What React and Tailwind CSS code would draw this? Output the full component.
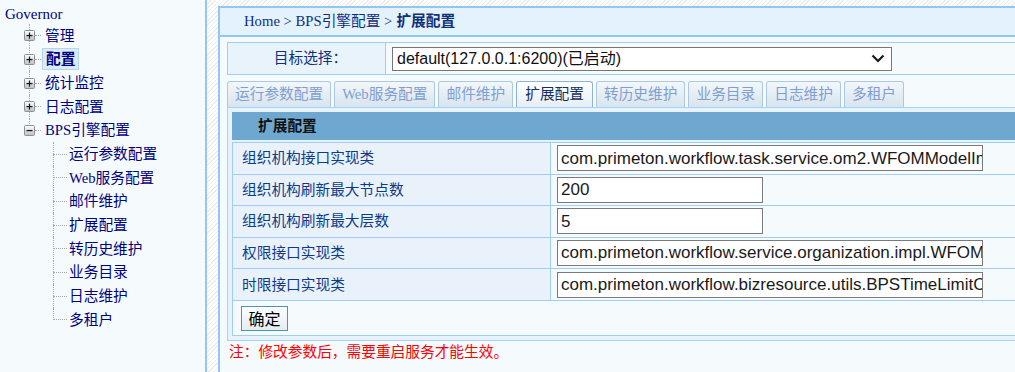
import React from 'react';

const topNodes = [
  { label: '管理' },
  { label: '配置', active: true },
  { label: '统计监控' },
  { label: '日志配置' },
];

const childNodes = ['运行参数配置', 'Web服务配置', '邮件维护', '扩展配置', '转历史维护', '业务目录', '日志维护', '多租户'];

const tabs = ['运行参数配置', 'Web服务配置', '邮件维护', '扩展配置', '转历史维护', '业务目录', '日志维护', '多租户'];

const rows = [
  { label: '组织机构接口实现类', value: 'com.primeton.workflow.task.service.om2.WFOMModelImpl', wide: true },
  { label: '组织机构刷新最大节点数', value: '200' },
  { label: '组织机构刷新最大层数', value: '5' },
  { label: '权限接口实现类', value: 'com.primeton.workflow.service.organization.impl.WFOMPermissionImpl', wide: true },
  { label: '时限接口实现类', value: 'com.primeton.workflow.bizresource.utils.BPSTimeLimitCalendarImpl', wide: true },
];

function ToggleBox({ open }) {
  return (
    <svg width="11" height="11" viewBox="0 0 11 11" className="relative z-10 block">
      <defs>
        <linearGradient id={open ? 'gm' : 'gp'} x1="0" y1="0" x2="0" y2="1">
          <stop offset="0" stopColor="#ffffff" />
          <stop offset="1" stopColor="#b9bdc2" />
        </linearGradient>
      </defs>
      <rect x="0.5" y="0.5" width="10" height="10" rx="1" fill={`url(#${open ? 'gm' : 'gp'})`} stroke="#8b9096" />
      <rect x="2.5" y="5" width="6" height="1.2" fill="#111" />
      {!open && <rect x="4.9" y="2.6" width="1.2" height="6" fill="#111" />}
    </svg>
  );
}

function TopRow({ label, active, open, last }) {
  return (
    <div className="flex items-center h-[23.67px]">
      <div className="relative ml-[24px] w-[11px] h-full flex items-center">
        <div className={`absolute left-[5px] top-0 border-l border-dotted border-[#a8a8a8] ${last ? 'h-1/2' : 'h-full'}`} />
        <ToggleBox open={open} />
      </div>
      <div className="w-[6px] border-t border-dotted border-[#a8a8a8]" />
      {active ? (
        <span className="ml-[1px] px-[3px] h-[22px] flex items-center bg-[#d9ebf7] border border-[#b4d5ec] font-bold text-[#000080]">{label}</span>
      ) : (
        <span className="ml-[2px] px-[2px] text-[#000080]">{label}</span>
      )}
    </div>
  );
}

function ChildRow({ label, last }) {
  return (
    <div className="flex items-center h-[23.67px]">
      <div className="relative ml-[53px] w-[14px] h-full flex items-center">
        <div className={`absolute left-0 top-0 border-l border-dotted border-[#a8a8a8] ${last ? 'h-1/2' : 'h-full'}`} />
        <div className="w-full border-t border-dotted border-[#a8a8a8]" />
      </div>
      <span className="ml-[2px] text-[#000080]">{label}</span>
    </div>
  );
}

export default function App() {
  return (
    <div className="w-[1015px] h-[372px] overflow-hidden flex bg-[repeating-linear-gradient(135deg,#ffffff_0px,#ffffff_2px,#ececec_2px,#ececec_3px)] font-['Liberation_Serif','Noto_Sans_CJK_SC',serif] text-[14.7px]">
      {/* tree */}
      <div className="w-[207px] shrink-0 h-full bg-[#f5fbfd] border-r-2 border-[#93c7f3]">
        <div className="h-[24px] pl-[5px] pt-[4px] leading-[20px] text-[#000080] text-[15px]">Governor</div>
        {topNodes.map((n) => (
          <TopRow key={n.label} label={n.label} active={n.active} />
        ))}
        <TopRow label="BPS引擎配置" open last />
        {childNodes.map((c, i) => (
          <ChildRow key={c} label={c} last={i === childNodes.length - 1} />
        ))}
      </div>

      {/* main */}
      <div className="ml-[11px] mt-[6px] flex-1 min-w-0 h-[366px] border-l-2 border-t-2 border-[#93c7f3] bg-[#f5fbfd]">
        <div className="h-[29px] flex items-center pl-[24px] bg-[#e3f2fd] border-b-2 border-[#93c7f3] text-[#10307a]">
          <span>Home &gt; BPS引擎配置 &gt; </span>
          <span className="font-bold ml-[4px]">扩展配置</span>
        </div>

        <div className="pl-[7px]">
          {/* target selection */}
          <div className="mt-[5px] h-[33px] flex border-y border-[#9fcdf5]">
            <div className="w-[159px] shrink-0 flex items-center justify-center bg-[#e8f3fb] border-x border-[#9fcdf5] text-[#10307a] pl-[8px]">
              目标选择：
            </div>
            <div className="flex items-center pl-[6px]">
              <div className="w-[500px] h-[24px] bg-white border border-[#767676] flex items-center justify-between pl-[4px] pr-[6px] font-['Liberation_Sans','Noto_Sans_CJK_SC',sans-serif] text-[16px] text-[#111]">
                <span>default(127.0.0.1:6200)(已启动)</span>
                <svg width="14" height="9" viewBox="0 0 14 9">
                  <path d="M1.5 1.5 L7 7 L12.5 1.5" fill="none" stroke="#1a1a1a" strokeWidth="2.2" />
                </svg>
              </div>
            </div>
          </div>

          {/* tabs */}
          <div className="mt-[6px] flex gap-[3px] items-end">
            {tabs.map((t) => {
              const on = t === '扩展配置';
              return (
                <div
                  key={t}
                  className={
                    on
                      ? 'h-[26px] px-[8px] flex items-center rounded-t-[3px] border border-b-0 border-[#8db4d8] bg-linear-to-b from-white to-[#e6eef4] text-[#12305f]'
                      : 'h-[26px] px-[7px] flex items-center rounded-t-[3px] border border-b-0 border-[#adc8e2] bg-linear-to-b from-[#f3f7fa] to-[#d8e4ee] text-[#7f9fd0]'
                  }
                >
                  {t}
                </div>
              );
            })}
          </div>

          {/* tab body */}
          <div className="border border-[#a9d0f5] bg-[#e7f3fc] p-[4px] pr-0 border-r-0">
            <div className="h-[28px] flex items-center pl-[26px] bg-[#6ea8d0] font-bold text-[#111]">扩展配置</div>
            <div className="mt-[2px] border border-[#9fcdf5] border-r-0 bg-[#f5fbfd]">
              {rows.map((r) => (
                <div key={r.label} className="h-[31.6px] flex border-b border-[#9fcdf5]">
                  <div className="w-[318px] shrink-0 flex items-center pl-[9px] bg-[#e9f2fa] border-r border-[#9fcdf5] text-[#0e3a8a]">
                    {r.label}
                  </div>
                  <div className="flex items-center pl-[6px]">
                    <div
                      className={`${r.wide ? 'w-[426px]' : 'w-[206px]'} h-[26px] bg-white border border-[#7a7a7a] flex items-center pl-[3px] overflow-hidden whitespace-nowrap font-['Liberation_Sans',sans-serif] text-[17px] text-[#1a1a1a]`}
                    >
                      {r.value}
                    </div>
                  </div>
                </div>
              ))}
              <div className="h-[34px] pl-[8px] pt-[5px]">
                <button className="w-[47px] h-[25px] border border-[#4b97ad] bg-linear-to-b from-[#fbfdfe] to-[#e4eef2] text-[16px] text-black font-['Noto_Sans_CJK_SC',sans-serif] leading-none">
                  确定
                </button>
              </div>
            </div>
          </div>

          <div className="pl-[2px] leading-[22px] text-[#ff0000] text-[14.7px]">注：修改参数后，需要重启服务才能生效。</div>
        </div>
      </div>
    </div>
  );
}
